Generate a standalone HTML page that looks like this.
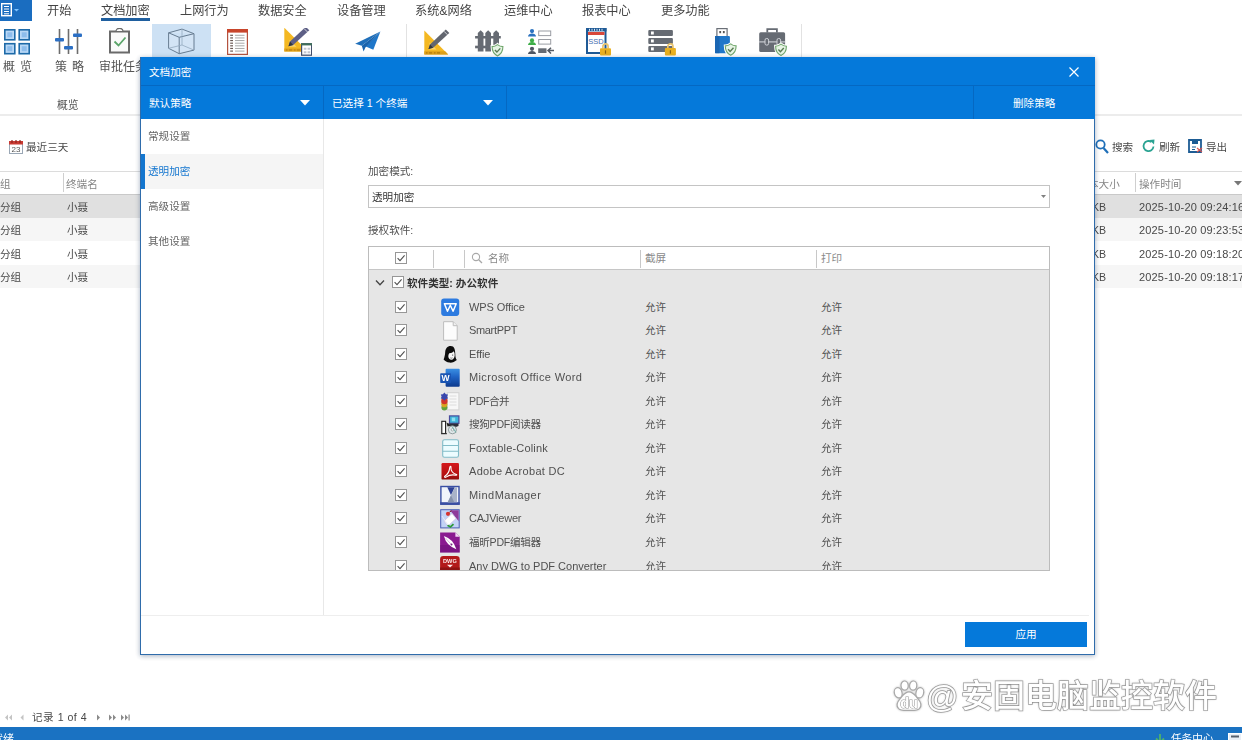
<!DOCTYPE html>
<html lang="zh-CN">
<head>
<meta charset="utf-8">
<title>文档加密</title>
<style>
*{box-sizing:border-box;margin:0;padding:0}
html,body{width:1242px;height:740px;overflow:hidden;background:#fff}
#root{position:absolute;left:0;top:0;width:1242px;height:740px;overflow:hidden;opacity:.999}
body{position:relative;font-family:"Liberation Sans","Noto Sans CJK SC",sans-serif;font-size:10.6px;color:#505050;line-height:1}
.a{position:absolute;white-space:nowrap}
.t{position:absolute;white-space:nowrap;line-height:16px;height:16px}
svg{display:block}
/* ribbon */
#appbtn{left:0;top:0;width:32px;height:21px;background:#1a6dc0}
.tab{font-size:12.2px;color:#444;top:3px}
#tabline{left:101px;top:18px;width:49px;height:3px;background:#1f5f9f}
.rl{font-size:12px;color:#555;top:59px}
#hl{left:152px;top:24px;width:59px;height:40px;background:#cde1f4}
#ribbot{left:0;top:114px;width:1242px;height:2px;background:#ececec}
.rsep{top:24px;width:1px;height:34px;background:#e2e2e2}
.ri{position:absolute}
/* bg grid */
.gh{top:176px;color:#858585}
.gr{color:#484848}
.rowsel{left:0;width:1242px;height:23px;background:#e0e0e0}
.rowalt{left:0;width:1242px;height:23px;background:#f6f6f6}
.gline{left:0;width:1242px;height:1px;background:#dcdcdc}
.gsep{top:173px;width:1px;height:19px;background:#cfcfcf}
/* status bar */
#status{left:0;top:727px;width:1242px;height:13px;background:#1a72c2}
/* dialog */
#dlg{left:140px;top:57px;width:955px;height:598px;background:#fff;border:1px solid #2f6cab;box-shadow:0 1px 5px rgba(30,60,100,.4)}
#dhead{left:141px;top:57px;width:954px;height:62px;background:#0579da}
.dl{background:#0568c2}
.w{color:#fff}
.nav{left:148px;color:#646464}
#navsel{left:141px;top:154px;width:182px;height:35px;background:#f5f5f5}
#navbar{left:141px;top:154px;width:4px;height:35px;background:#1476cf}
#sideline{left:323px;top:119px;width:1px;height:496px;background:#e8e8e8}
#footline{left:141px;top:615px;width:948px;height:1px;background:#eee}
#apply{left:965px;top:622px;width:122px;height:25px;background:#0579da;color:#fff;text-align:center;line-height:25px}
#combo{left:368px;top:185px;width:682px;height:23px;border:1px solid #c4c4c4;background:#fff}
#tbl{left:368px;top:246px;width:682px;height:325px;border:1px solid #bcbcbc;background:#e6e6e6;overflow:hidden}
#thead{left:0;top:0;width:680px;height:23px;background:#fff;border-bottom:1px solid #c6c6c6}
.th{color:#8a8a8a}
.vs{top:3px;width:1px;height:18px;background:#c8c8c8}
.cb{position:absolute;width:12px;height:12px;border:1px solid #979797;background:#fff}
.cb svg{position:absolute;left:0;top:0;width:10px;height:10px}
.icw{position:absolute;left:70px;width:22px;height:22px}
.ic{position:absolute;left:0;top:0;width:22px;height:22px}
.wm{top:676px;line-height:40px;height:40px;color:#fff;font-weight:500;-webkit-text-stroke:1.5px #a8a8a8;paint-order:stroke fill;text-shadow:0 0 3px rgba(0,0,0,.28)}
</style>
</head>
<body>
<div id="root">
<!-- RIBBON -->
<div class="a" id="appbtn">
<svg class="a" style="left:1px;top:3px;width:20px;height:14px" viewBox="0 0 20 14"><rect x="0.7" y="0.7" width="9.6" height="12" fill="none" stroke="#fff" stroke-width="1.4"/><path d="M3 3.5h5M3 6h5M3 8.5h5M3 10.8h5" stroke="#fff" stroke-width="1"/><path d="M13 6h5l-2.5 2.5z" fill="#7fc3ff"/></svg>
</div>
<div class="t tab" style="left:47px">开始</div>
<div class="t tab" style="left:101px">文档加密</div>
<div class="t tab" style="left:180px">上网行为</div>
<div class="t tab" style="left:258px">数据安全</div>
<div class="t tab" style="left:337px">设备管理</div>
<div class="t tab" style="left:415px">系统&amp;网络</div>
<div class="t tab" style="left:504px">运维中心</div>
<div class="t tab" style="left:582px">报表中心</div>
<div class="t tab" style="left:661px">更多功能</div>
<div class="a" id="tabline"></div>
<div class="a" id="hl"></div>
<div class="a rsep" style="left:406px"></div>
<div class="a rsep" style="left:801px"></div>
<svg class="ri" style="left:4px;top:29px;width:26px;height:26px" viewBox="0 0 26 26"><rect x="0.8" y="0.8" width="10" height="10" fill="#b9d8f6" stroke="#1d6aa8" stroke-width="1.6"/><rect x="3.3" y="3.3" width="5" height="5" fill="#8dbdec"/><rect x="15.2" y="0.8" width="10" height="10" fill="#b9d8f6" stroke="#1d6aa8" stroke-width="1.6"/><rect x="17.7" y="3.3" width="5" height="5" fill="#8dbdec"/><rect x="0.8" y="14.7" width="10" height="10" fill="#b9d8f6" stroke="#1d6aa8" stroke-width="1.6"/><rect x="3.3" y="17.2" width="5" height="5" fill="#8dbdec"/><rect x="15.2" y="14.7" width="10" height="10" fill="#b9d8f6" stroke="#1d6aa8" stroke-width="1.6"/><rect x="17.7" y="17.2" width="5" height="5" fill="#8dbdec"/></svg>
<svg class="ri" style="left:55px;top:29px;width:27px;height:25px" viewBox="0 0 27 25"><path d="M4.5 0v25M13.5 0v25M22.5 0v25" stroke="#6d6d6d" stroke-width="1.6"/><rect x="0" y="9" width="9" height="3.4" rx="1" fill="#2b6fc4"/><rect x="9" y="17" width="9" height="3.4" rx="1" fill="#2b6fc4"/><rect x="18" y="4.5" width="9" height="3.4" rx="1" fill="#2b6fc4"/></svg>
<svg class="ri" style="left:109px;top:28px;width:21px;height:26px" viewBox="0 0 21 26"><rect x="1" y="3.5" width="19" height="21" fill="#fafafa" stroke="#6a6a6a" stroke-width="2"/><path d="M7 3.5c0-2 1.5-3.2 3.5-3.2s3.5 1.2 3.5 3.2z" fill="#fafafa" stroke="#6a6a6a" stroke-width="1.2"/><path d="M5.5 13.5l4 4 7-8" fill="none" stroke="#5aa469" stroke-width="1.8"/></svg>
<svg class="ri" style="left:168px;top:28px;width:27px;height:27px" viewBox="0 0 27 27"><path d="M0.6 4.8L14 1.1 26 5.7V22.1L11.2 25.7 0.6 20.3zM0.6 4.8L11.2 9.3 26 5.7M11.2 9.3V25.7" fill="#d9e7f5" fill-opacity=".5" stroke="#677c91" stroke-width="1" stroke-linejoin="round"/><path d="M14 1.1V17L0.6 20.3M14 17l12 5.1" fill="none" stroke="#94a9bf" stroke-width=".8"/></svg>
<svg class="ri" style="left:227px;top:29px;width:21px;height:26px" viewBox="0 0 21 26"><rect x="0.6" y="0.6" width="19.8" height="24.8" fill="#fff" stroke="#b4533f" stroke-width="1.2"/><rect x="0" y="0" width="21" height="3.6" fill="#c8452b"/><rect x="3.2" y="5.70" width="2.8" height="1.2" fill="#6b5a55"/><rect x="8" y="5.80" width="9.5" height="1" fill="#a9a9a9"/><rect x="3.2" y="8.33" width="2.8" height="1.2" fill="#6b5a55"/><rect x="8" y="8.43" width="9.5" height="1" fill="#a9a9a9"/><rect x="3.2" y="10.96" width="2.8" height="1.2" fill="#6b5a55"/><rect x="8" y="11.06" width="9.5" height="1" fill="#a9a9a9"/><rect x="3.2" y="13.59" width="2.8" height="1.2" fill="#6b5a55"/><rect x="8" y="13.69" width="9.5" height="1" fill="#a9a9a9"/><rect x="3.2" y="16.22" width="2.8" height="1.2" fill="#6b5a55"/><rect x="8" y="16.32" width="9.5" height="1" fill="#a9a9a9"/><rect x="3.2" y="18.85" width="2.8" height="1.2" fill="#6b5a55"/><rect x="8" y="18.95" width="9.5" height="1" fill="#a9a9a9"/><rect x="3.2" y="21.48" width="2.8" height="1.2" fill="#6b5a55"/><rect x="8" y="21.58" width="9.5" height="1" fill="#a9a9a9"/></svg>
<svg class="ri" style="left:284px;top:28px;width:28px;height:28px" viewBox="0 0 28 28"><g transform="translate(0,-1.8)"><path d="M0.3 1.5V25.4H24.2z" fill="#f4b822"/><path d="M5.5 13.5V20.5H12.5z" fill="#f9d56e"/><path d="M0.3 22.3H21.1L24.2 25.4H0.3z" fill="#dea01a"/><path d="M2 23.8h1.5M5 23.8h3M10 23.8h1.5M13 23.8h3" stroke="#b67c0c" stroke-width="1.2"/><path d="M4.5 20l1.5-4.6L21.8 0.6 25.3 4.1 9.2 18.8z" fill="#5d5f86"/><path d="M4.5 20l1.5-4.6 3.2 3.4z" fill="#33363c"/><path d="M20 2.3l3.5 3.5" stroke="#d5d7dc" stroke-width="1"/></g><rect x="17.6" y="15.8" width="10" height="11.4" fill="#fff" stroke="#434e6b" stroke-width="1.2"/><rect x="17" y="15.2" width="11.2" height="2.2" fill="#3f6e5a"/><path d="M19.8 19.8h2.6v2h-2.6zM23.6 19.8h2.6v2h-2.6zM19.8 23.2h2.6v2h-2.6zM23.6 23.2h2.6v2h-2.6z" fill="#c3c6cf"/></svg>
<svg class="ri" style="left:355px;top:31px;width:26px;height:22px" viewBox="0 0 26 22"><path d="M0.2 12.7L25.4 0.5 6.8 14.7z" fill="#1f6fba"/><path d="M25.4 0.5L18.3 18.7 10.8 15.4z" fill="#1f77c9"/><path d="M6.8 14.7L25.4 0.5 10.4 16.4 8.6 20.4z" fill="#1a64ad"/></svg>
<svg class="ri" style="left:424px;top:29px;width:26px;height:27px" viewBox="0 0 26 27"><path d="M0.3 1.5V25.4H24.2z" fill="#f4b822"/><path d="M5.5 13.5V20.5H12.5z" fill="#f9d56e"/><path d="M0.3 22.3H21.1L24.2 25.4H0.3z" fill="#dea01a"/><path d="M2 23.8h1.5M5 23.8h3M10 23.8h1.5M13 23.8h3" stroke="#b67c0c" stroke-width="1.2"/><path d="M4.5 20l1.5-4.6L21.8 0.6 25.3 4.1 9.2 18.8z" fill="#62666f"/><path d="M4.5 20l1.5-4.6 3.2 3.4z" fill="#33363c"/><path d="M20 2.3l3.5 3.5" stroke="#d5d7dc" stroke-width="1"/></svg>
<svg class="ri" style="left:475px;top:29px;width:29px;height:28px" viewBox="0 0 29 28"><path d="M2.8 4l2.850-2.8 2.850 2.8v18.4h-5.7z" fill="#666b73"/><path d="M10.3 4l2.850-2.8 2.850 2.8v18.4h-5.7z" fill="#666b73"/><path d="M18.3 4l2.850-2.8 2.850 2.8v18.4h-5.7z" fill="#666b73"/><rect x="0.1" y="7" width="25.7" height="2.5" fill="#666b73"/><rect x="0.1" y="16.7" width="25.7" height="2.6" fill="#666b73"/><g transform="translate(16.5,15)"><path d="M0.6 2.6c2.4 0 4-.8 5.4-2 1.4 1.2 3 2 5.4 2 0 5-1.5 7.5-5.4 9.3C2.1 10.1.6 7.6.6 2.6z" fill="#fff" stroke="#fff" stroke-width="3"/><path d="M0.6 2.6c2.4 0 4-.8 5.4-2 1.4 1.2 3 2 5.4 2 0 5-1.5 7.5-5.4 9.3C2.1 10.1.6 7.6.6 2.6z" fill="#e6f4e4" stroke="#70a66c" stroke-width="1.1"/><path d="M3.4 6l2 2.1 3.4-3.7" fill="none" stroke="#587a52" stroke-width="1.4"/></g></svg>
<svg class="ri" style="left:528px;top:29px;width:28px;height:26px" viewBox="0 0 28 26"><circle cx="4" cy="2.1" r="2.1" fill="#2a72c0"/><path d="M0 7.5 c0-4 8-4 8 0z" fill="#2a72c0"/><circle cx="4" cy="11.4" r="2.1" fill="#3fae49"/><path d="M0 15.9 c0-4 8-4 8 0z" fill="#3fae49"/><circle cx="4" cy="19.8" r="2.1" fill="#4f5663"/><path d="M0 24.9 c0-4 8-4 8 0z" fill="#4f5663"/><rect x="10.7" y="2" width="12" height="4.6" fill="#fff" stroke="#9a9da3" stroke-width="1"/><rect x="10.7" y="10.5" width="12" height="4.6" fill="#fff" stroke="#9a9da3" stroke-width="1"/><rect x="10.2" y="19.3" width="8.3" height="4.7" fill="#666b73"/><path d="M26 21.6h-6M23 18.7l-3 2.900 3 2.900" fill="none" stroke="#555a63" stroke-width="1.5"/></svg>
<svg class="ri" style="left:586px;top:28px;width:26px;height:28px" viewBox="0 0 26 28"><rect x="1" y="1" width="18.5" height="24" fill="#fff" stroke="#1f5a96" stroke-width="2"/><rect x="0" y="0" width="20.5" height="3.4" fill="#1f5a96"/><path d="M3.5 0.8v2M6 0.8v2M8.5 0.8v2M11 0.8v2M13.5 0.8v2M16 0.8v2" stroke="#dfe9f5" stroke-width="1"/><rect x="2" y="4" width="16.5" height="3" fill="#d9473a"/><text x="10" y="16.2" font-size="7.5" fill="#3f6cb0" text-anchor="middle" font-family="Liberation Sans,sans-serif">SSD</text><g transform="translate(14,15)"><path d="M2.900 5.5v-2a2.6 2.6 0 0 1 5.2 0v2" fill="none" stroke="#e9c46f" stroke-width="1.7"/><rect x="0" y="5.2" width="11" height="7.4" rx="1" fill="#e9b020"/><rect x="4.900" y="7.3" width="1.2" height="3.4" fill="#8a6210"/></g></svg>
<svg class="ri" style="left:648px;top:30px;width:28px;height:26px" viewBox="0 0 28 26"><rect x="0.3" y="0.00" width="24.6" height="6" rx="1" fill="#666b73"/><rect x="3" y="1.50" width="2.8" height="3" fill="#fff"/><rect x="0.3" y="7.95" width="24.6" height="6" rx="1" fill="#666b73"/><rect x="3" y="9.45" width="2.8" height="3" fill="#fff"/><rect x="0.3" y="15.90" width="24.6" height="6" rx="1" fill="#666b73"/><rect x="3" y="17.40" width="2.8" height="3" fill="#fff"/><g transform="translate(16.900,12.900)"><path d="M2.900 5.5v-2a2.6 2.6 0 0 1 5.2 0v2" fill="none" stroke="#e9c46f" stroke-width="1.7"/><rect x="0" y="5.2" width="11" height="7.4" rx="1" fill="#e9b020"/><rect x="4.900" y="7.3" width="1.2" height="3.4" fill="#8a6210"/></g></svg>
<svg class="ri" style="left:715px;top:28px;width:23px;height:29px" viewBox="0 0 23 29"><rect x="1.900" y="0.6" width="10.2" height="8" fill="#fff" stroke="#6a6f77" stroke-width="1.2"/><rect x="4.3" y="3" width="1.8" height="2.2" fill="#555"/><rect x="7.900" y="3" width="1.8" height="2.2" fill="#555"/><rect x="0" y="8" width="14.900" height="17.2" rx="1" fill="#1f77c9"/><rect x="0" y="8" width="4.5" height="17.2" fill="#1a66b3"/><g transform="translate(9.7,15.3)"><path d="M0.6 2.6c2.4 0 4-.8 5.4-2 1.4 1.2 3 2 5.4 2 0 5-1.5 7.5-5.4 9.3C2.1 10.1.6 7.6.6 2.6z" fill="#fff" stroke="#fff" stroke-width="3"/><path d="M0.6 2.6c2.4 0 4-.8 5.4-2 1.4 1.2 3 2 5.4 2 0 5-1.5 7.5-5.4 9.3C2.1 10.1.6 7.6.6 2.6z" fill="#e6f4e4" stroke="#70a66c" stroke-width="1.1"/><path d="M3.4 6l2 2.1 3.4-3.7" fill="none" stroke="#587a52" stroke-width="1.4"/></g></svg>
<svg class="ri" style="left:759px;top:28px;width:29px;height:29px" viewBox="0 0 29 29"><path d="M8.3 4.5v-3.3h9.6v3.3" fill="none" stroke="#666b73" stroke-width="1.8"/><rect x="0.2" y="4.2" width="25.900" height="19.7" rx="1.5" fill="#666b73"/><path d="M0.2 13.900h25.900" stroke="#d0d3d8" stroke-width="1.1"/><rect x="6" y="10.5" width="3.6" height="6.6" rx="1.6" fill="#666b73" stroke="#d0d3d8" stroke-width="1"/><rect x="18" y="10.5" width="3.6" height="6.6" rx="1.6" fill="#666b73" stroke="#d0d3d8" stroke-width="1"/><g transform="translate(16,15.6)"><path d="M0.6 2.6c2.4 0 4-.8 5.4-2 1.4 1.2 3 2 5.4 2 0 5-1.5 7.5-5.4 9.3C2.1 10.1.6 7.6.6 2.6z" fill="#fff" stroke="#fff" stroke-width="3"/><path d="M0.6 2.6c2.4 0 4-.8 5.4-2 1.4 1.2 3 2 5.4 2 0 5-1.5 7.5-5.4 9.3C2.1 10.1.6 7.6.6 2.6z" fill="#e6f4e4" stroke="#70a66c" stroke-width="1.1"/><path d="M3.4 6l2 2.1 3.4-3.7" fill="none" stroke="#587a52" stroke-width="1.4"/></g></svg>
<div class="t rl" style="left:3px"><span style="margin-right:5px">概</span>览</div>
<div class="t rl" style="left:55px"><span style="margin-right:5px">策</span>略</div>
<div class="t rl" style="left:99px">审批任务</div>
<div class="t rl" style="left:57px;top:97px;font-size:10.8px">概览</div>
<div class="a" id="ribbot"></div>

<!-- BACKGROUND GRID -->
<svg class="a" style="left:9px;top:140px;width:14px;height:14px" viewBox="0 0 14 14"><rect x="0.5" y="1.5" width="13" height="12" fill="#fff" stroke="#9aa7b5"/><rect x="0" y="1" width="14" height="3.5" fill="#c93a32"/><path d="M3 0v3M7 0v3M11 0v3" stroke="#8c241f" stroke-width="1.2"/><text x="7" y="12" font-size="8" fill="#555" text-anchor="middle" font-family="Liberation Sans,sans-serif">23</text></svg>
<div class="t gr" style="left:26px;top:139px">最近三天</div>
<div class="a gline" style="top:171px"></div>
<div class="a gline" style="top:194px;background:#c9c9c9"></div>
<div class="a rowsel" style="top:195px"></div>
<div class="a rowalt" style="top:218px"></div>
<div class="a rowalt" style="top:265px"></div>
<div class="a gsep" style="left:63px"></div>
<div class="a gsep" style="left:1135px"></div>
<div class="t gh" style="left:0px">组</div>
<div class="t gh" style="left:66px">终端名</div>
<div class="t gh" style="left:1088px">本大小</div>
<div class="t gh" style="left:1139px">操作时间</div>
<svg class="a" style="left:1234px;top:181px;width:8px;height:5px" viewBox="0 0 8 5"><path d="M0 0h8l-4 4.5z" fill="#777"/></svg>
<div class="t gr" style="left:0;top:199px">分组</div><div class="t gr" style="left:67px;top:199px">小聂</div>
<div class="t gr" style="left:0;top:222px">分组</div><div class="t gr" style="left:67px;top:222px">小聂</div>
<div class="t gr" style="left:0;top:246px">分组</div><div class="t gr" style="left:67px;top:246px">小聂</div>
<div class="t gr" style="left:0;top:269px">分组</div><div class="t gr" style="left:67px;top:269px">小聂</div>
<div class="t gr" style="left:1092px;top:199px">KB</div><div class="t gr" style="left:1139px;top:199px;font-size:11px;letter-spacing:.17px">2025-10-20 09:24:16</div>
<div class="t gr" style="left:1092px;top:222px">KB</div><div class="t gr" style="left:1139px;top:222px;font-size:11px;letter-spacing:.17px">2025-10-20 09:23:53</div>
<div class="t gr" style="left:1092px;top:246px">KB</div><div class="t gr" style="left:1139px;top:246px;font-size:11px;letter-spacing:.17px">2025-10-20 09:18:20</div>
<div class="t gr" style="left:1092px;top:269px">KB</div><div class="t gr" style="left:1139px;top:269px;font-size:11px;letter-spacing:.17px">2025-10-20 09:18:17</div>
<svg class="a" style="left:1095px;top:139px;width:14px;height:15px" viewBox="0 0 14 15"><circle cx="5.5" cy="5.5" r="4.2" fill="none" stroke="#1f6fb8" stroke-width="1.8"/><path d="M8.5 9L13 14" stroke="#1f6fb8" stroke-width="2.2"/></svg>
<div class="t gr" style="left:1112px;top:139px">搜索</div>
<svg class="a" style="left:1142px;top:139px;width:14px;height:14px" viewBox="0 0 14 14"><path d="M11.5 7.5a5 5 0 1 1-2-4.5" fill="none" stroke="#2aa392" stroke-width="1.8"/><path d="M7.5 1l5-.5-.5 5z" fill="#2aa392"/></svg>
<div class="t gr" style="left:1159px;top:139px">刷新</div>
<svg class="a" style="left:1188px;top:139px;width:15px;height:14px" viewBox="0 0 15 14"><path d="M1 1h12v12h-12z" fill="#fff" stroke="#1d5c94" stroke-width="1.8"/><rect x="4" y="1" width="6" height="4" fill="#1d5c94"/><path d="M4 8h4M4 10.5h3" stroke="#1d5c94"/><path d="M9 9l5 4M14 9l-5 4" stroke="#d9534f" stroke-width="1.2"/></svg>
<div class="t gr" style="left:1206px;top:139px">导出</div>
<svg class="a" style="left:4px;top:713px;width:130px;height:9px" viewBox="0 0 130 9"><path d="M4 1.5v6L1 4.5zM8 1.5v6L5 4.5zM19.5 1.5v6l-3-3z" fill="#c4c4c4"/><path d="M93 1.5v6l3-3zM105 1.5v6l3-3zM109 1.5v6l3-3zM117 1.5v6l3-3zM121 1.5v6l3-3zM124.5 1.5h1.2v6h-1.2z" fill="#8a8a8a"/></svg>
<div class="t gr" style="left:32px;top:709px;letter-spacing:.5px">记录 1 of 4</div>
<div class="a" id="status"></div>
<div class="t w" style="left:-8px;top:731px;font-size:11px">就绪</div>
<svg class="a" style="left:1155px;top:734px;width:10px;height:9px" viewBox="0 0 10 9"><path d="M5 0v8M1 4.5l4 4 4-4" fill="none" stroke="#4fb36a" stroke-width="1.800"/></svg>
<div class="t w" style="left:1171px;top:730px;font-size:10.6px">任务中心</div>
<svg class="a" style="left:1228px;top:733px;width:14px;height:7px" viewBox="0 0 14 7"><rect x="0.5" y="0.5" width="13" height="8" fill="#e9eef5" stroke="#fff"/><rect x="3" y="2.5" width="8" height="2" fill="#55606e"/></svg>
<!-- watermark -->
<svg class="a" style="left:893px;top:680px;width:32px;height:33px;filter:drop-shadow(0 0 1px rgba(0,0,0,.25))" viewBox="0 0 32 33"><g fill="#fff" stroke="#a8a8a8" stroke-width="1.2"><ellipse cx="5.2" cy="12.8" rx="3.8" ry="5.2" transform="rotate(-15 5.2 12.8)"/><ellipse cx="11.6" cy="5.6" rx="3.6" ry="4.6" transform="rotate(-5 11.6 5.6)"/><ellipse cx="20.2" cy="5.6" rx="3.6" ry="4.6" transform="rotate(5 20.2 5.6)"/><ellipse cx="26.8" cy="12.8" rx="3.8" ry="5.2" transform="rotate(15 26.8 12.8)"/><path d="M16 11.8c4.2 0 6 3.6 8.800 6.800 3.2 3.6 4.2 7.4 1.6 10-2.6 2.400-6.800 1.800-10.4 1.800s-7.800.6-10.400-1.800c-2.600-2.600-1.600-6.4 1.600-10 2.800-3.2 4.600-6.800 8.800-6.800z"/></g><text x="16" y="28" font-size="14.5" font-weight="700" fill="#fff" stroke="#999" stroke-width="1.1" text-anchor="middle" font-family="Liberation Sans,sans-serif" paint-order="stroke fill">du</text></svg>
<div class="t wm" style="left:926px;font-size:32px;font-weight:400;top:677px">@</div>
<div class="t wm" style="left:961px;font-size:32px">安固电脑监控软件</div>

<!-- DIALOG -->
<div class="a" id="dlg"></div>
<div class="a" id="dhead"></div>
<div class="a dl" style="left:141px;top:85px;width:954px;height:1px"></div>
<div class="a dl" style="left:323px;top:86px;width:1px;height:33px"></div>
<div class="a dl" style="left:506px;top:86px;width:1px;height:33px"></div>
<div class="a dl" style="left:973px;top:86px;width:1px;height:33px"></div>
<div class="t w" style="left:149px;top:64px">文档加密</div>
<svg class="a" style="left:1069px;top:67px;width:10px;height:10px" viewBox="0 0 10 10"><path d="M0.5 0.5l9 9M9.5 0.5l-9 9" stroke="#fff" stroke-width="1.2"/></svg>
<div class="t w" style="left:149px;top:95px">默认策略</div>
<svg class="a" style="left:300px;top:100px;width:10px;height:6px" viewBox="0 0 10 6"><path d="M0 0h10l-5 5.5z" fill="#fff"/></svg>
<div class="t w" style="left:332px;top:95px">已选择 1 个终端</div>
<svg class="a" style="left:483px;top:100px;width:10px;height:6px" viewBox="0 0 10 6"><path d="M0 0h10l-5 5.5z" fill="#fff"/></svg>
<div class="t w" style="left:1013px;top:95px">删除策略</div>
<div class="a" id="navsel"></div><div class="a" id="navbar"></div>
<div class="t nav" style="top:128px">常规设置</div>
<div class="t nav" style="top:163px;color:#1476cf">透明加密</div>
<div class="t nav" style="top:198px">高级设置</div>
<div class="t nav" style="top:233px">其他设置</div>
<div class="a" id="sideline"></div>
<div class="a" id="footline"></div>
<div class="a" id="apply">应用</div>
<div class="t" style="left:368px;top:163px">加密模式:</div>
<div class="a" id="combo"><div class="t" style="left:3px;top:3px;color:#333">透明加密</div>
<svg class="a" style="left:672px;top:9px;width:5px;height:3px" viewBox="0 0 5 3"><path d="M0 0h5l-2.500 3z" fill="#808080"/></svg></div>
<div class="t" style="left:368px;top:222px">授权软件:</div>
<div class="a" id="tbl">
<div class="a" id="thead"></div>
<div class="cb" style="left:26px;top:5px"><svg viewBox="0 0 10 10"><path d="M1.6 5.2 L4 7.6 L8.6 2.4" fill="none" stroke="#505050" stroke-width="1.1"/></svg></div>
<div class="a vs" style="left:64px"></div><div class="a vs" style="left:95px"></div><div class="a vs" style="left:271px"></div><div class="a vs" style="left:447px"></div>
<svg class="a" style="left:102px;top:5px;width:12px;height:12px" viewBox="0 0 12 12"><circle cx="5" cy="5" r="3.600" fill="none" stroke="#a8a8a8" stroke-width="1.100"/><path d="M7.700 7.700L11 11" stroke="#a8a8a8" stroke-width="1.300"/></svg>
<div class="t th" style="left:119px;top:3px">名称</div><div class="t th" style="left:276px;top:3px">截屏</div><div class="t th" style="left:452px;top:3px">打印</div>
<svg class="a" style="left:6px;top:32px;width:10px;height:8px" viewBox="0 0 10 8"><path d="M1 1.5L5 5.800L9 1.5" fill="none" stroke="#444" stroke-width="1.300"/></svg>
<div class="cb" style="left:23px;top:29px"><svg viewBox="0 0 10 10"><path d="M1.6 5.2 L4 7.6 L8.6 2.4" fill="none" stroke="#505050" stroke-width="1.1"/></svg></div>
<div class="t" style="left:38px;top:28px;font-weight:700;color:#333">软件类型: 办公软件</div>
<div class="cb" style="left:26px;top:54px"><svg viewBox="0 0 10 10"><path d="M1.6 5.2 L4 7.6 L8.6 2.4" fill="none" stroke="#505050" stroke-width="1.1"/></svg></div>
<div class="icw" style="top:49px"><svg class="ic" viewBox="0 0 22 22"><rect x="2.2" y="2.4" width="18" height="17.5" rx="2.8" fill="#2d7be0"/><path d="M5.4 7.7H17.2L14.1 15.3 11.3 9.3 8.5 15.3z" fill="none" stroke="#fff" stroke-width="1.5" stroke-linejoin="round"/></svg></div>
<div class="t" style="left:100px;top:52px;font-size:11px;letter-spacing:-0.09px">WPS Office</div>
<div class="t" style="left:276px;top:52px;">允许</div>
<div class="t" style="left:452px;top:52px;">允许</div>
<div class="cb" style="left:26px;top:77px"><svg viewBox="0 0 10 10"><path d="M1.6 5.2 L4 7.6 L8.6 2.4" fill="none" stroke="#505050" stroke-width="1.1"/></svg></div>
<div class="icw" style="top:72px"><svg class="ic" viewBox="0 0 22 22"><path d="M4.6 2.7h9.6l4 4v14.5h-13.6z" fill="#fcfcfc" stroke="#bdbdbd" stroke-width="1"/><path d="M14.2 2.7v4h4" fill="#f0f0f0" stroke="#bdbdbd" stroke-width="1"/></svg></div>
<div class="t" style="left:100px;top:75px;font-size:11px;letter-spacing:-0.34px">SmartPPT</div>
<div class="t" style="left:276px;top:75px;">允许</div>
<div class="t" style="left:452px;top:75px;">允许</div>
<div class="cb" style="left:26px;top:101px"><svg viewBox="0 0 10 10"><path d="M1.6 5.2 L4 7.6 L8.6 2.4" fill="none" stroke="#505050" stroke-width="1.1"/></svg></div>
<div class="icw" style="top:96px"><svg class="ic" viewBox="0 0 22 22"><path d="M11.8 3c-3.6 0-5.4 2.6-5.6 6.2-.1 2.6-.8 5.2-1.6 7.3 1.2 1.5 3.4 2.8 5.9 3.1 2.7.2 5.2-.6 7.3-2.5-.9-1.3-1.5-3.1-1.5-5.8C16.3 6.5 15.2 3 11.8 3z" fill="#0c0c0c"/><path d="M10.2 10.2c1.7.1 3.6-.7 4.6-2 .7 1.4 1 2.8.9 4.3-.2 2.6-1.6 4.3-3.3 4.3-1.7 0-3-1.5-3.1-3.6 0-1.1.3-2.1.9-3z" fill="#f6f6f6"/><circle cx="13.7" cy="12" r=".55" fill="#111"/><path d="M11.3 14.8c.7.5 1.5.5 2.2 0" fill="none" stroke="#111" stroke-width=".5"/></svg></div>
<div class="t" style="left:100px;top:99px;font-size:11px;letter-spacing:-0.1px">Effie</div>
<div class="t" style="left:276px;top:99px;">允许</div>
<div class="t" style="left:452px;top:99px;">允许</div>
<div class="cb" style="left:26px;top:124px"><svg viewBox="0 0 10 10"><path d="M1.6 5.2 L4 7.6 L8.6 2.4" fill="none" stroke="#505050" stroke-width="1.1"/></svg></div>
<div class="icw" style="top:119px"><svg class="ic" viewBox="0 0 22 22"><defs><linearGradient id="wg" x1="0" y1="0" x2="0" y2="1"><stop offset="0" stop-color="#3a8fe3"/><stop offset=".45" stop-color="#1f63c4"/><stop offset="1" stop-color="#0e3a8c"/></linearGradient></defs><rect x="6.6" y="2.8" width="14.1" height="18" rx="1" fill="url(#wg)"/><rect x="1.2" y="7.2" width="10.8" height="9.8" rx=".8" fill="#1a55b3"/><text x="6.6" y="15.3" font-size="8.5" font-weight="700" fill="#fff" text-anchor="middle" font-family="Liberation Sans,sans-serif">W</text></svg></div>
<div class="t" style="left:100px;top:122px;font-size:11px;letter-spacing:0.38px">Microsoft Office Word</div>
<div class="t" style="left:276px;top:122px;">允许</div>
<div class="t" style="left:452px;top:122px;">允许</div>
<div class="cb" style="left:26px;top:148px"><svg viewBox="0 0 10 10"><path d="M1.6 5.2 L4 7.6 L8.6 2.4" fill="none" stroke="#505050" stroke-width="1.1"/></svg></div>
<div class="icw" style="top:143px"><svg class="ic" viewBox="0 0 22 22"><rect x="8.3" y="2.7" width="11.6" height="17.2" fill="#f7f7f7" stroke="#d2d2d2" stroke-width="1"/><path d="M10.5 6h7M10.5 9h7M10.5 12h7M10.5 15h7" stroke="#dcdcdc" stroke-width="1"/><circle cx="5.4" cy="17.6" r="3" fill="#62a33a"/><circle cx="5.4" cy="14.2" r="3.1" fill="#d8a321"/><circle cx="5.4" cy="11" r="3.2" fill="#d0352b"/><path d="M5.4 2.4l1.5 1.8 2.1.4-.8 2 .8 2-2.1.5-1.5 1.7-1.5-1.7-2.1-.5.8-2-.8-2 2.1-.4z" fill="#3947ad"/></svg></div>
<div class="t" style="left:100px;top:146px;font-size:10.6px;letter-spacing:-0.42px">PDF合并</div>
<div class="t" style="left:276px;top:146px;">允许</div>
<div class="t" style="left:452px;top:146px;">允许</div>
<div class="cb" style="left:26px;top:171px"><svg viewBox="0 0 10 10"><path d="M1.6 5.2 L4 7.6 L8.6 2.4" fill="none" stroke="#505050" stroke-width="1.1"/></svg></div>
<div class="icw" style="top:166px"><svg class="ic" viewBox="0 0 22 22"><rect x="10.5" y="2.9" width="9.4" height="7.4" fill="#3fb6da" stroke="#4a4c9c" stroke-width="1.2"/><rect x="12.8" y="4.6" width="3.4" height="3.6" fill="#8fe0f0"/><path d="M9 10.5h10.5v2.5l-4 1.5z" fill="#2b2f3a"/><circle cx="13.4" cy="16.8" r="4" fill="#dfe8ea" stroke="#7c8a8c" stroke-width=".8"/><circle cx="13.4" cy="16.8" r="1.2" fill="#fff" stroke="#7c8a8c" stroke-width=".6"/><path d="M13 13.5l4 6" stroke="#6fb0a8" stroke-width="1"/><path d="M7.5 9.5l5.5 3-4.5 1z" fill="#222"/><rect x="2.8" y="8.3" width="3.8" height="12.2" fill="#fff" stroke="#1d1d1d" stroke-width="1.1"/><path d="M2 20.7h6" stroke="#333" stroke-width="1"/></svg></div>
<div class="t" style="left:100px;top:169px;font-size:10.6px;letter-spacing:-0.29px">搜狗PDF阅读器</div>
<div class="t" style="left:276px;top:169px;">允许</div>
<div class="t" style="left:452px;top:169px;">允许</div>
<div class="cb" style="left:26px;top:195px"><svg viewBox="0 0 10 10"><path d="M1.6 5.2 L4 7.6 L8.6 2.4" fill="none" stroke="#505050" stroke-width="1.1"/></svg></div>
<div class="icw" style="top:190px"><svg class="ic" viewBox="0 0 22 22"><rect x="3.7" y="2.7" width="15.8" height="17.5" rx="1.8" fill="#ecfcff" stroke="#82bcc8" stroke-width="1.1"/><path d="M3.7 8.5h15.8M3.7 14.3h15.8" stroke="#82bcc8" stroke-width="1.1"/></svg></div>
<div class="t" style="left:100px;top:193px;font-size:11px;letter-spacing:0.16px">Foxtable-Colink</div>
<div class="t" style="left:276px;top:193px;">允许</div>
<div class="t" style="left:452px;top:193px;">允许</div>
<div class="cb" style="left:26px;top:218px"><svg viewBox="0 0 10 10"><path d="M1.6 5.2 L4 7.6 L8.6 2.4" fill="none" stroke="#505050" stroke-width="1.1"/></svg></div>
<div class="icw" style="top:213px"><svg class="ic" viewBox="0 0 22 22"><defs><linearGradient id="ag" x1="0" y1="0" x2="0" y2="1"><stop offset="0" stop-color="#d4191c"/><stop offset=".7" stop-color="#b50f12"/><stop offset="1" stop-color="#8f0b0d"/></linearGradient></defs><rect x="2.5" y="3" width="17.5" height="16.6" rx="1.2" fill="url(#ag)"/><path d="M5.8 16.3c2.3-1.3 4.6-5.3 5-8.9.2-1.6 1.4-1.3 1.2.2-.4 2.9 1.9 6 5 6.6 1.3.3 1 1.3-.3 1-3.2-.7-6.6-.2-9.7 1.9-1.1.7-2-.3-1.2-.8z" fill="none" stroke="#fff" stroke-width="1.1"/></svg></div>
<div class="t" style="left:100px;top:216px;font-size:11px;letter-spacing:0.31px">Adobe Acrobat DC</div>
<div class="t" style="left:276px;top:216px;">允许</div>
<div class="t" style="left:452px;top:216px;">允许</div>
<div class="cb" style="left:26px;top:242px"><svg viewBox="0 0 10 10"><path d="M1.6 5.2 L4 7.6 L8.6 2.4" fill="none" stroke="#505050" stroke-width="1.1"/></svg></div>
<div class="icw" style="top:237px"><svg class="ic" viewBox="0 0 22 22"><rect x="1.9" y="2.5" width="18.1" height="17.6" fill="#f1f4fb" stroke="#3a4fa3" stroke-width="1.4"/><rect x="1.2" y="18.2" width="19.5" height="2.6" fill="#3a4fa3"/><path d="M8.3 3.2h7.5l-3.8 8z" fill="#2f4296"/><path d="M12 11.2l3.8-8h2.2v15h-9.4z" fill="#a9b3c9"/><path d="M12 11.2l3.2 7h-6.4z" fill="#8693ad"/></svg></div>
<div class="t" style="left:100px;top:240px;font-size:11px;letter-spacing:0.46px">MindManager</div>
<div class="t" style="left:276px;top:240px;">允许</div>
<div class="t" style="left:452px;top:240px;">允许</div>
<div class="cb" style="left:26px;top:265px"><svg viewBox="0 0 10 10"><path d="M1.6 5.2 L4 7.6 L8.6 2.4" fill="none" stroke="#505050" stroke-width="1.1"/></svg></div>
<div class="icw" style="top:260px"><svg class="ic" viewBox="0 0 22 22"><rect x="1.7" y="2.7" width="18.5" height="18.2" fill="#c3d3f6" stroke="#4b5fb5" stroke-width="1"/><path d="M11 3.2h8.7v11z" fill="#8e3a9a"/><path d="M5 14l8-7.5 4 5-8 7.5z" fill="#fff" stroke="#c9b7d6" stroke-width=".6"/><circle cx="9" cy="6.8" r="2.1" fill="#d7332f"/><path d="M10.5 5l2-1.2" stroke="#7a1f1f" stroke-width="1"/><path d="M8.5 18.2l3 1.8 3-2.8" fill="none" stroke="#2f9a3a" stroke-width="1.8"/><path d="M3 9l6 9" stroke="#e6ecfb" stroke-width="1"/></svg></div>
<div class="t" style="left:100px;top:263px;font-size:11px;letter-spacing:-0.21px">CAJViewer</div>
<div class="t" style="left:276px;top:263px;">允许</div>
<div class="t" style="left:452px;top:263px;">允许</div>
<div class="cb" style="left:26px;top:289px"><svg viewBox="0 0 10 10"><path d="M1.6 5.2 L4 7.6 L8.6 2.4" fill="none" stroke="#505050" stroke-width="1.1"/></svg></div>
<div class="icw" style="top:284px"><svg class="ic" viewBox="0 0 22 22"><path d="M1.1 1.4h15.3l4.3 4.3v15.7h-19.6z" fill="#8a1a90"/><path d="M1.1 14h19.6v7.4h-19.6z" fill="#6d1279" opacity=".55"/><path d="M16.4 1.4v4.3h4.3z" fill="#f3d3f3"/><path d="M4.9 5.1Q14 8 17.4 18.2Q7.5 15 4.9 5.1z" fill="#fff"/><circle cx="12.5" cy="13.6" r="1" fill="#6d1279"/><path d="M6.5 7l5.6 6.2" stroke="#c79acb" stroke-width=".7"/></svg></div>
<div class="t" style="left:100px;top:287px;font-size:10.6px;letter-spacing:-0.29px">福昕PDF编辑器</div>
<div class="t" style="left:276px;top:287px;">允许</div>
<div class="t" style="left:452px;top:287px;">允许</div>
<div class="cb" style="left:26px;top:313px"><svg viewBox="0 0 10 10"><path d="M1.6 5.2 L4 7.6 L8.6 2.4" fill="none" stroke="#505050" stroke-width="1.1"/></svg></div>
<div class="icw" style="top:308px"><svg class="ic" viewBox="0 0 22 22"><rect x="1.1" y="1" width="19.6" height="20" rx="3.2" fill="#b3191a"/><rect x="1.1" y="12.5" width="19.6" height="8.5" fill="#8f1213"/><text x="10.9" y="8.4" font-size="5.6" font-weight="700" fill="#fbe9e9" text-anchor="middle" font-family="Liberation Sans,sans-serif">DWG</text><path d="M8 9.8h6l-3 2.8z" fill="#fbe9e9"/></svg></div>
<div class="t" style="left:100px;top:311px;font-size:11px;letter-spacing:-0.01px">Any DWG to PDF Converter</div>
<div class="t" style="left:276px;top:311px;">允许</div>
<div class="t" style="left:452px;top:311px;">允许</div>
</div>
</div>
</body>
</html>
